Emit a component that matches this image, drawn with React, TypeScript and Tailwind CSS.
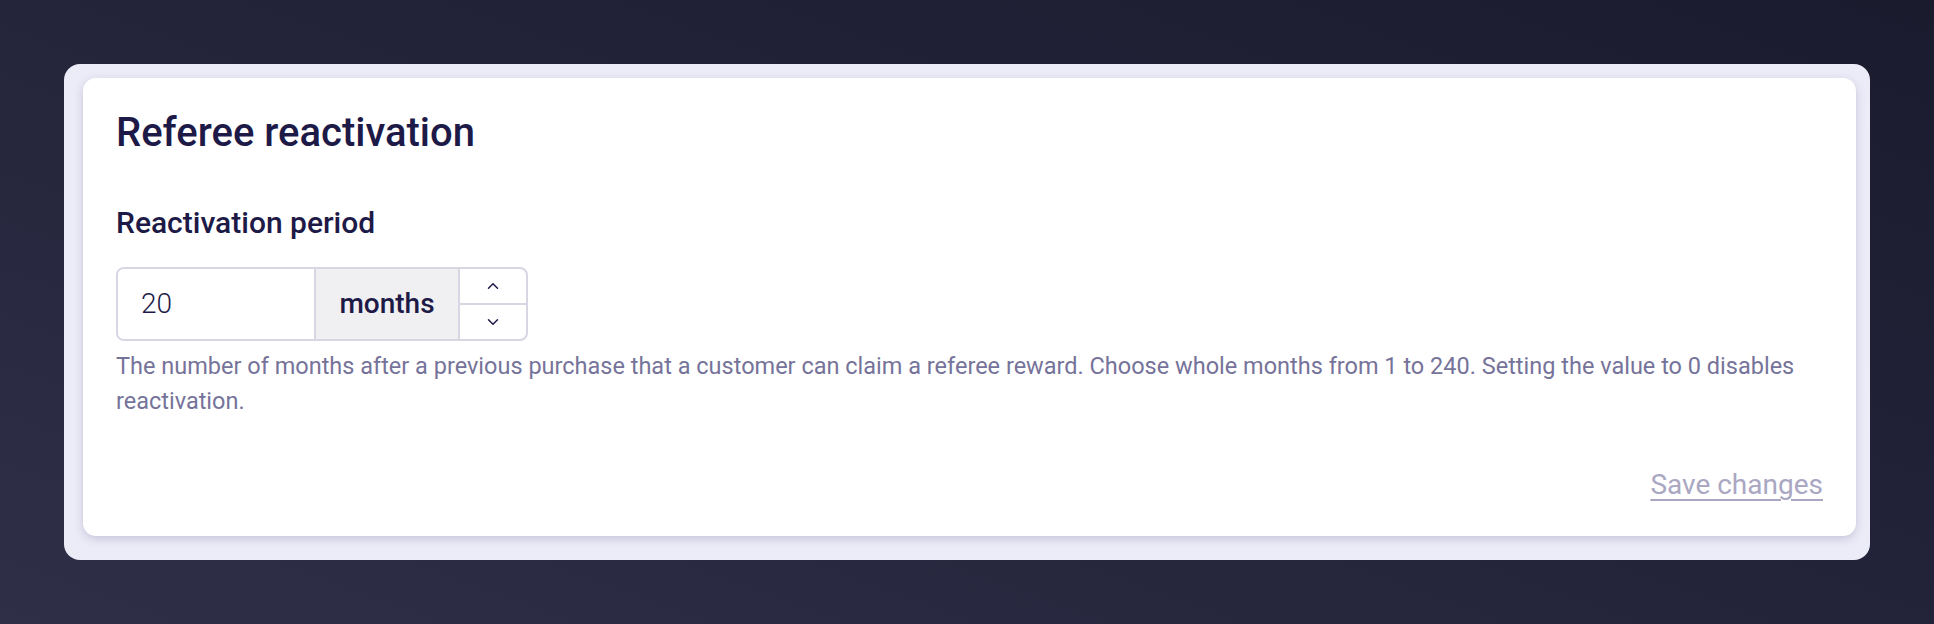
import { useState } from 'react'
import { ChevronUp, ChevronDown } from 'lucide-react'

export default function App() {
  const [months, setMonths] = useState(20)

  function step(delta: number) {
    setMonths((m) => Math.min(240, Math.max(0, m + delta)))
  }

  return (
    <div
      className="min-h-[624px] w-full bg-[linear-gradient(200deg,#1b1b2e_0%,#23243a_50%,#2f3048_100%)] px-16 pt-16 pb-16"
      style={{ fontFamily: 'Roboto, "Liberation Sans", sans-serif' }}
    >
      {/* Frame */}
      <div className="rounded-[16px] bg-[#ececf8] pt-[14px] pr-[14px] pb-[24px] pl-[19px]">
        {/* Card */}
        <div className="rounded-[13px] bg-white px-[33px] pt-[31px] pb-[33px] shadow-[0_3px_10px_rgba(60,58,110,0.22)]">
          <h1 className="text-[40px] leading-[48px] font-medium text-[#1e1a47]">Referee reactivation</h1>

          <h2 className="mt-[48px] text-[30px] leading-[36px] font-medium text-[#1e1a47]">Reactivation period</h2>

          <div className="mt-[26px] flex h-[74px] w-[412px] rounded-[8px] border-2 border-[#d7d6e2]">
            <input
              value={months}
              onChange={(e) => setMonths(Number(e.target.value) || 0)}
              className="w-[196px] rounded-l-[6px] bg-white pl-[23px] text-[28px] font-light text-[#1e1a47] outline-none"
            />
            <div className="flex w-[146px] items-center justify-center border-x-2 border-[#d7d6e2] bg-[#f0f0f2] text-[28px] font-medium text-[#1e1a47]">
              months
            </div>
            <div className="flex flex-1 flex-col">
              <button onClick={() => step(1)} className="flex flex-1 items-center justify-center border-b-2 border-[#d7d6e2] text-[#1e1a47]">
                <ChevronUp className="size-[18px]" strokeWidth={2} />
              </button>
              <button onClick={() => step(-1)} className="flex flex-1 items-center justify-center text-[#1e1a47]">
                <ChevronDown className="size-[18px]" strokeWidth={2} />
              </button>
            </div>
          </div>

          <p className="mt-[8px] text-[23.5px] leading-[35px] text-[#76739a]">
            The number of months after a previous purchase that a customer can claim a referee reward. Choose whole months from 1 to 240. Setting the value to 0 disables reactivation.
          </p>

          <div className="mt-[48px] flex justify-end">
            <button className="text-[28px] leading-[36px] text-[#aaa7c2] underline underline-offset-[5px]">Save changes</button>
          </div>
        </div>
      </div>
    </div>
  )
}
